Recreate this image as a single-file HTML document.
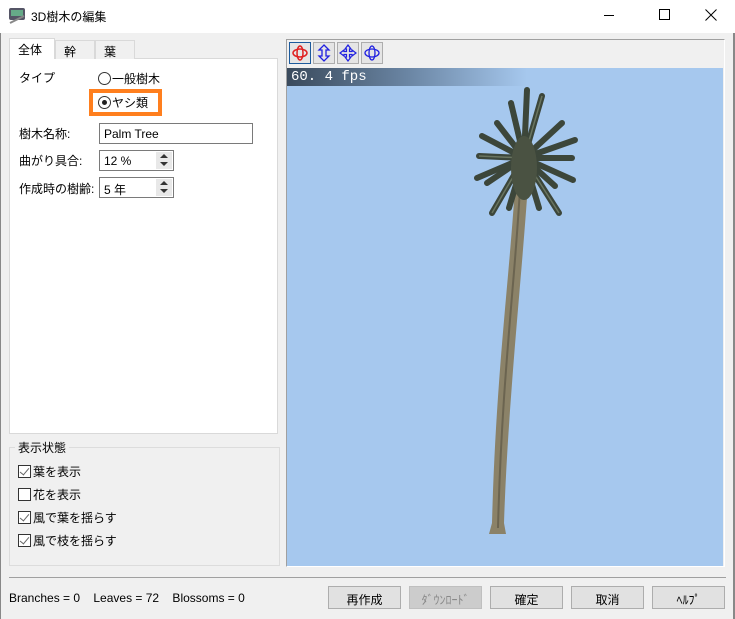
<!DOCTYPE html>
<html><head><meta charset="utf-8"><style>
*{box-sizing:border-box;margin:0;padding:0}
body{width:735px;height:619px;background:#f0f0f0;font-family:"Liberation Sans","Noto Sans CJK JP",sans-serif;font-size:12px;color:#000;position:relative;overflow:hidden}
.a{position:absolute;white-space:nowrap}
.title{left:0;top:0;width:735px;height:33px;background:#fff}
.tab{top:40px;height:19px;border:1px solid #d9d9d9;border-bottom:none;background:#f0f0f0;padding:2px 0 0 8px;font-size:12px}
.panel{left:9px;top:58px;width:269px;height:376px;background:#fff;border:1px solid #d9d9d9}
.inp{background:#fff;border:1px solid #7a7a7a;height:21px;padding:3px 4px;font-size:12px}
.spin{position:absolute;right:1px;top:1px;width:16px;height:17px;background:#e8e8e8}
.spin:before{content:"";position:absolute;left:4px;top:2px;border:4px solid transparent;border-bottom-color:#333;border-top:none}
.spin:after{content:"";position:absolute;left:4px;top:10px;border:4px solid transparent;border-top-color:#333;border-bottom:none}
.btn{top:586px;width:73px;height:23px;background:#e1e1e1;border:1px solid #adadad;text-align:center;padding-top:4px}
.row{display:flex;align-items:center;height:16px}
.cb{width:13px;height:13px;border:1px solid #333;background:#fff;margin-right:2px;position:relative;flex:none}
.cb.c:after{content:"";position:absolute;left:3px;top:0px;width:4px;height:8px;border:solid #666;border-width:0 1.5px 1.5px 0;transform:rotate(40deg)}
.tb{top:42px;width:22px;height:22px;border:1px solid #adadad;background:#e5e5e5}
.rad{width:13px;height:13px;border:1px solid #333;border-radius:50%;background:#fff;margin-right:1px;flex:none}
</style></head><body>
<div class="a title"></div>
<svg class="a" style="left:8px;top:7px" width="20" height="18"><rect x="1" y="1" width="16" height="12" fill="#556" rx="2"/><rect x="3" y="3" width="12" height="6" fill="#6a8"/><path d="M2 16 L16 9" stroke="#888" stroke-width="2"/></svg>
<div class="a" style="left:31px;top:8px;font-size:12px">3D樹木の編集</div>
<div class="a" style="left:604px;top:15px;width:10px;height:1px;background:#000"></div>
<div class="a" style="left:659px;top:9px;width:11px;height:11px;border:1px solid #000"></div>
<svg class="a" style="left:705px;top:9px" width="12" height="12"><path d="M0.5 0.5 L11.5 11.5 M11.5 0.5 L0.5 11.5" stroke="#000" stroke-width="1"/></svg>
<div class="a" style="left:0;top:33px;width:1px;height:586px;background:#888"></div>
<div class="a" style="left:733px;top:33px;width:2px;height:586px;background:#888"></div>

<div class="a panel"></div>
<div class="a tab" style="left:9px;top:38px;width:46px;height:21px;background:#fff">全体</div>
<div class="a tab" style="left:55px;width:40px">幹</div>
<div class="a tab" style="left:95px;width:40px">葉</div>
<div class="a" style="left:19px;top:69px">タイプ</div>
<div class="a row" style="left:98px;top:70px"><span class="rad"></span>一般樹木</div>
<div class="a" style="left:89px;top:89px;width:73px;height:27px;border:4px solid #ff7f1e"></div>
<div class="a row" style="left:98px;top:94px"><span class="rad" style="padding:3px"><span style="display:block;width:5px;height:5px;border-radius:50%;background:#222"></span></span>ヤシ類</div>
<div class="a" style="left:19px;top:125px">樹木名称:</div>
<div class="a inp" style="left:99px;top:123px;width:154px">Palm Tree</div>
<div class="a" style="left:19px;top:152px">曲がり具合:</div>
<div class="a inp" style="left:99px;top:150px;width:75px">12 %<div class="spin"></div></div>
<div class="a" style="left:19px;top:180px">作成時の樹齢:</div>
<div class="a inp" style="left:99px;top:177px;width:75px">5 年<div class="spin"></div></div>

<div class="a" style="left:9px;top:447px;width:271px;height:119px;border:1px solid #dcdcdc"></div>
<div class="a" style="left:15px;top:439px;background:#f0f0f0;padding:0 3px">表示状態</div>
<div class="a row" style="left:18px;top:463px"><span class="cb c"></span>葉を表示</div>
<div class="a row" style="left:18px;top:486px"><span class="cb"></span>花を表示</div>
<div class="a row" style="left:18px;top:509px"><span class="cb c"></span>風で葉を揺らす</div>
<div class="a row" style="left:18px;top:532px"><span class="cb c"></span>風で枝を揺らす</div>

<div class="a" style="left:286px;top:39px;width:439px;height:528px;border:1px solid #a0a0a0;border-right-color:#fff;border-bottom-color:#fff"></div>
<div class="a tb" style="left:289px;border-color:#1c5a9c"><svg width="20" height="20"><ellipse cx="10" cy="10" rx="7" ry="4" fill="none" stroke="#e02020" stroke-width="1.5"/><ellipse cx="10" cy="10" rx="3" ry="7" fill="none" stroke="#e02020" stroke-width="1.5"/></svg></div>
<div class="a tb" style="left:313px"><svg width="20" height="20"><path d="M10 2 L15 7 H12 V13 H15 L10 18 L5 13 H8 V7 H5 Z" fill="none" stroke="#2020e0" stroke-width="1.3"/></svg></div>
<div class="a tb" style="left:337px"><svg width="20" height="20"><path d="M10 2 L13 6 H11.5 V8.5 H14 V7 L18 10 L14 13 V11.5 H11.5 V14 H13 L10 18 L7 14 H8.5 V11.5 H6 V13 L2 10 L6 7 V8.5 H8.5 V6 H7 Z" fill="none" stroke="#2020e0" stroke-width="1.2"/></svg></div>
<div class="a tb" style="left:361px"><svg width="20" height="20"><ellipse cx="10" cy="10" rx="7" ry="4" fill="none" stroke="#2020e0" stroke-width="1.3"/><ellipse cx="10" cy="10" rx="3" ry="7" fill="none" stroke="#2020e0" stroke-width="1.3"/></svg></div>
<div class="a" style="left:287px;top:68px;width:436px;height:498px;background:#a6c8ee"></div>
<div class="a" style="left:287px;top:68px;width:240px;height:18px;background:linear-gradient(90deg,#3a4a5c,#6a85a3 50%,#a6c8ee);color:#fff;font-family:'Liberation Mono',monospace;font-size:14px;padding:1px 4px">60. 4 fps</div>
<svg class="a" style="left:287px;top:68px" width="436" height="498">
<path d="M229 100 C224 200,209 300,205 455 L202 466 L219 466 L217 455 C221 330,236 200,242 100 Z" fill="#8b8268"/>
<path d="M234 100 C230 200,215 300,211 460" stroke="#6b6450" stroke-width="2" fill="none"/>
<g stroke="#3c463a" stroke-width="6" stroke-linecap="round" fill="none">
<path d="M237 90 L200 115"/><path d="M237 90 L268 118"/><path d="M237 90 L192 88"/><path d="M237 90 L285 90"/>
<path d="M237 90 L224 35"/><path d="M237 90 L255 28"/><path d="M237 90 L210 55"/><path d="M237 90 L275 55"/>
<path d="M237 90 L205 145"/><path d="M237 90 L272 145"/><path d="M237 90 L240 22"/><path d="M237 90 L195 68"/><path d="M237 90 L288 72"/>
<path d="M237 90 L222 140"/><path d="M237 90 L252 140"/><path d="M237 90 L190 110"/><path d="M237 90 L286 112"/>
</g>
<g stroke="#6a7560" stroke-width="1.5" fill="none"><path d="M237 90 L205 145"/><path d="M237 90 L272 145"/><path d="M237 90 L255 28"/><path d="M237 90 L192 88"/></g>
<ellipse cx="237" cy="100" rx="13" ry="32" fill="#4a5242"/>
</svg>

<div class="a" style="left:9px;top:577px;width:717px;height:1px;background:#a0a0a0"></div>
<div class="a" style="left:9px;top:591px">Branches = 0&nbsp;&nbsp;&nbsp; Leaves = 72&nbsp;&nbsp;&nbsp; Blossoms = 0</div>
<div class="a btn" style="left:328px">再作成</div>
<div class="a btn" style="left:409px;background:#ccc;border-color:#bfbfbf;color:#888">ﾀﾞｳﾝﾛｰﾄﾞ</div>
<div class="a btn" style="left:490px">確定</div>
<div class="a btn" style="left:571px">取消</div>
<div class="a btn" style="left:652px">ﾍﾙﾌﾟ</div>
</body></html>
